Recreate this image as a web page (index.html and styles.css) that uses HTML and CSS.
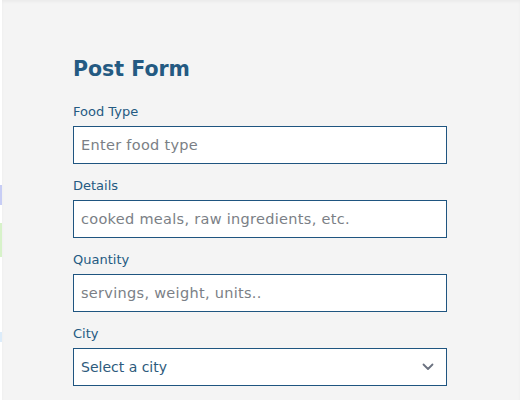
FILE: index.html
```html
<!DOCTYPE html>
<html lang="en">
  <head>
    <meta charset="UTF-8" />
    <title>Post Form</title>
    <meta name="viewport" content="width=device-width, initial-scale=1.0" />
    <link rel="stylesheet" href="styles.css">
  </head>
  <body>
    <div class="page">
      <div class="edge">
        <span class="mark blue"></span>
        <span class="mark green"></span>
        <span class="mark sky"></span>
      </div>
      <main class="panel">
        <form class="post-form">
          <h1>Post Form</h1>
          <div class="field">
            <label for="foodType">Food Type</label>
            <input id="foodType" type="text" placeholder="Enter food type" />
          </div>
          <div class="field">
            <label for="details">Details</label>
            <input id="details" type="text" placeholder="cooked meals, raw ingredients, etc." />
          </div>
          <div class="field">
            <label for="quantity">Quantity</label>
            <input id="quantity" type="text" placeholder="servings, weight, units.." />
          </div>
          <div class="field">
            <label for="city">City</label>
            <div class="select-wrap">
              <select id="city">
                <option>Select a city</option>
              </select>
              <svg class="chevron" width="12" height="8" viewBox="0 0 12 8">
                <path d="M1.5 1.5 L6 6 L10.5 1.5" fill="none" stroke="#6b7280" stroke-width="1.8" stroke-linecap="round" stroke-linejoin="round" />
              </svg>
            </div>
          </div>
        </form>
      </main>
    </div>
  </body>
</html>
```

FILE: styles.css
```css
body {
  margin: 0;
  background: #f4f4f4;
  font-family: "DejaVu Sans", sans-serif;
  color: #235a83;
}
.page {
  display: flex;
  height: 400px;
  overflow: hidden;
}
.edge {
  width: 2px;
  background: #fff;
  display: flex;
  flex-direction: column;
}
.mark {
  display: block;
  width: 2px;
}
.mark.blue {
  margin-top: 185px;
  height: 20px;
  background: #c7cdf5;
}
.mark.green {
  margin-top: 18px;
  height: 34px;
  background: #d7f2c9;
}
.mark.sky {
  margin-top: 75px;
  height: 10px;
  background: #dcecfa;
}
.panel {
  flex: 1;
  padding-right: 2px;
  background: #f4f4f4;
  box-shadow: inset 0 2px 3px rgba(0, 0, 0, 0.04);
}
.post-form {
  width: 374px;
  margin: 0 auto;
  padding-top: 55px;
}
h1 {
  margin: 0 0 21px 0;
  font-size: 20.5px;
  font-weight: 700;
  color: #245a82;
  line-height: 28px;
}
.field {
  margin-bottom: 14px;
}
label {
  display: block;
  font-size: 13px;
  line-height: 16px;
  color: #245a82;
  margin-bottom: 6px;
}
input,
select {
  box-sizing: border-box;
  width: 100%;
  height: 38px;
  border: 1px solid #1f5580;
  border-radius: 0;
  background: #fff;
  padding: 0 7px;
  font-family: inherit;
  font-size: 14px;
  color: #2d5a7c;
  outline: none;
}
input {
  font-size: 14.5px;
  letter-spacing: 0.3px;
}
input::placeholder {
  color: #7b7f86;
}
.select-wrap {
  position: relative;
}
select {
  appearance: none;
  -webkit-appearance: none;
}
.chevron {
  position: absolute;
  right: 13px;
  top: 15px;
  pointer-events: none;
}
```
